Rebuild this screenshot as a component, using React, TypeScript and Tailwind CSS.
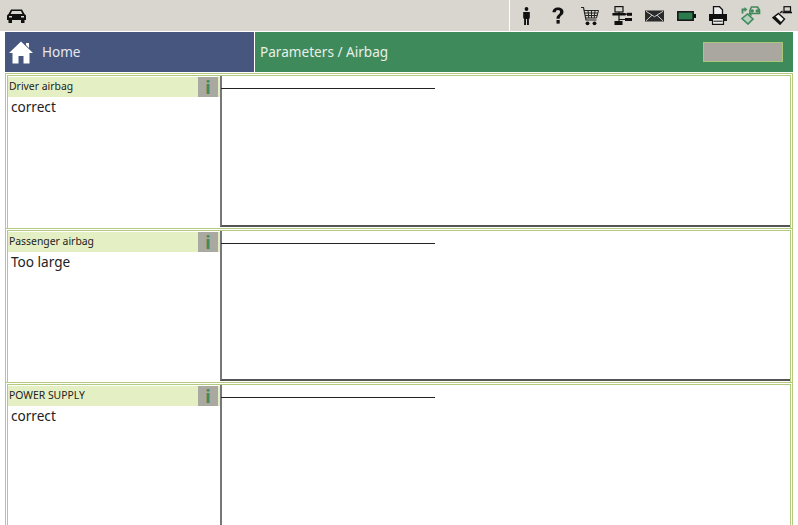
import React from 'react';

const PersonIcon = () => (
  <svg width="9" height="18" viewBox="0 0 9 18">
    <circle cx="4.5" cy="2" r="1.9" fill="#111" />
    <path d="M1.2 5h6.6v6.5H6.9V18H5v-6H4v6H2.1v-6.5h-.9z" fill="#111" />
  </svg>
);

const QuestionIcon = () => (
  <svg width="12" height="17" viewBox="0 0 12 17">
    <path d="M0.5 5.2C0.5 2 2.8 0.4 6 0.4s5.5 1.7 5.5 4.4c0 3.6-3.8 3.6-3.8 7H4.5c0-4.4 3.6-4.2 3.6-6.8 0-1.2-.8-1.9-2.1-1.9-1.4 0-2.2.8-2.2 2.1z" fill="#111" />
    <rect x="4.5" y="13" width="3.2" height="3.6" fill="#111" />
  </svg>
);

const CartIcon = () => (
  <svg width="18" height="20" viewBox="0 0 18 20" fill="none" stroke="#222" strokeWidth="1">
    <path d="M0 1.5h2.5l2.5 12.5h10.5" strokeWidth="1.2" />
    <path d="M3 4.5h14.5l-2 7.5H4.6M7 4.5l.8 7.5M10.5 4.5v7.5M14 4.5l-.8 7.5M3.6 7h13.2M4.2 9.5h12" />
    <circle cx="6.5" cy="17.3" r="1.9" fill="#111" stroke="none" />
    <circle cx="13.5" cy="17.3" r="1.9" fill="#111" stroke="none" />
  </svg>
);

const NetworkIcon = () => (
  <svg width="20" height="19" viewBox="0 0 20 19" fill="none" stroke="#111" strokeWidth="1.2">
    <rect x="3" y="0.6" width="8" height="5.4" />
    <path d="M1 7.5h12v1.5H1z" fill="#111" />
    <path d="M7 6v1.5M7 9v6M13 8.2h2M7 13.5h6" />
    <rect x="2.5" y="15" width="8" height="4" fill="#111" stroke="none" />
    <rect x="15" y="6.8" width="5" height="3" fill="#111" stroke="none" />
    <rect x="13" y="12" width="7" height="3" fill="#111" stroke="none" />
  </svg>
);

const MailIcon = () => (
  <svg width="19" height="12" viewBox="0 0 19 12">
    <rect x="0" y="0.5" width="19" height="11" fill="#2a2a2a" />
    <path d="M1 1.3l8.5 5.4L18 1.3M1 10.8l6-5.6M18 10.8l-6-5.6" fill="none" stroke="#ddd" strokeWidth="0.9" />
  </svg>
);

const BatteryIcon = () => (
  <svg width="19" height="10" viewBox="0 0 19 10">
    <rect x="0.8" y="0.8" width="15.4" height="8.4" fill="#2c7a4e" stroke="#111" strokeWidth="1.5" />
    <rect x="16.5" y="3" width="2.5" height="4" fill="#111" />
  </svg>
);

const PrinterIcon = () => (
  <svg width="20" height="19" viewBox="0 0 20 19">
    <path d="M5.5 0.7h6l3 3v5h-9z" fill="#eee" stroke="#111" strokeWidth="1.3" />
    <path d="M1 8h18v7h-3v-3H4v3H1z" fill="#111" />
    <path d="M4.5 12.5h11v5.8h-11z" fill="#eee" stroke="#111" strokeWidth="1.2" />
    <path d="M5.5 15.2h9" stroke="#111" strokeWidth="1" />
  </svg>
);

const DiagnosisIcon = () => (
  <svg width="21" height="19" viewBox="0 0 21 19" fill="none" stroke="#3f8a5a" strokeWidth="1.6">
    <path d="M2.5 7.5V3.5H5" strokeWidth="1.8" />
    <path d="M4.5 1l2.8 2.5L4.5 6z" fill="#3f8a5a" stroke="none" />
    <path d="M10 4l1.5-3h6L19.5 4v3.5H10z" />
    <circle cx="12.2" cy="5" r="1" fill="#3f8a5a" />
    <circle cx="17.3" cy="5" r="1" fill="#3f8a5a" />
    <path d="M7.5 8l5.5 5-5 5L2 12.5z" fill="#b4d2bd" />
    <path d="M9 7l2.5 2.5" />
  </svg>
);

const ConnectorIcon = () => (
  <svg width="20" height="19" viewBox="0 0 20 19" fill="none" stroke="#111" strokeWidth="1.2">
    <rect x="12" y="0.7" width="6.5" height="4.6" />
    <path d="M10.5 6.5H20" strokeWidth="1.6" />
    <path d="M6.5 7.5l6 5.5-4.5 5.2-7-6.5z" fill="#f4f4f0" strokeWidth="1.4" />
    <path d="M1 11.7l7 6.5 1.5-1.7-6-6z" fill="#111" stroke="none" />
    <path d="M8 7l2.5-2" strokeWidth="1.4" />
  </svg>
);

const CarIcon = () => (
  <svg width="19" height="14" viewBox="0 0 19 14">
    <path d="M4 0.5h11L17.5 5c1 .5 1.5 1.2 1.5 2.3V11H0V7.3C0 6.2.5 5.5 1.5 5z" fill="#111" />
    <path d="M5 2h9l1.4 3H3.6z" fill="#d9d5cf" />
    <rect x="1.5" y="10" width="3.5" height="4" fill="#111" />
    <rect x="14" y="10" width="3.5" height="4" fill="#111" />
    <rect x="2" y="7" width="3" height="1.5" fill="#d9d5cf" />
    <rect x="14" y="7" width="3" height="1.5" fill="#d9d5cf" />
  </svg>
);

const HomeIcon = () => (
  <svg width="24" height="23" viewBox="0 0 24 23">
    <path d="M12 0.5L24 12h-3.5v10.5H14.5V15h-5v7.5H3.5V12H0z M17 2h3v5l-3-3z" fill="#fff" />
  </svg>
);

const toolIcons = [
  <PersonIcon />,
  <QuestionIcon />,
  <CartIcon />,
  <NetworkIcon />,
  <MailIcon />,
  <BatteryIcon />,
  <PrinterIcon />,
  <DiagnosisIcon />,
  <ConnectorIcon />,
];

const ParameterRow = ({ label, value }: { label: string; value: string }) => (
  <div className="h-[154.5px] shrink-0 bg-white flex border-x-[3px] border-t-[3px] [border-style:double] border-[#b3cb7e]">
    <div className="w-[212px] shrink-0 bg-white flex flex-col">
      <div className="h-5 mt-px flex items-center justify-between bg-[#e4efc4]">
        <span className="pl-px text-[10.4px] text-[#222]">{label}</span>
        <span className="w-5 h-5 bg-[#a9a8a1] flex items-center justify-center text-[18px] leading-none font-bold text-[#3f8a5a] mr-[2px]">i</span>
      </div>
      <div className="pl-[3px] text-[13.6px] leading-5 text-[#222]">{value}</div>
    </div>
    <div className="flex-1 mb-px border-l-2 border-b-2 border-l-[#777] border-b-[#555] pt-3">
      <div className="w-[214px] -ml-px h-px bg-[#222]" />
    </div>
  </div>
);

export default function App() {
  return (
    <div className="w-[798px] h-[525px] overflow-hidden bg-white flex flex-col font-['Noto_Sans','Open_Sans',sans-serif]">
      <div className="h-[31px] shrink-0 flex items-center justify-between bg-[#d9d5cf] pl-[7px]">
        <CarIcon />
        <div className="h-full flex border-l border-white">
          {toolIcons.map((icon, i) => (
            <div key={i} className="w-8 flex items-center justify-center">
              {icon}
            </div>
          ))}
        </div>
      </div>

      <div className="h-10 shrink-0 mt-px mx-[5px] flex">
        <div className="w-[249px] bg-[#46567f] flex items-center gap-[9px] pl-1 text-[13.5px]">
          <HomeIcon />
          <span className="text-[#e8e8ee]">Home</span>
        </div>
        <div className="flex-1 ml-px bg-[#3f8a5a] flex items-center justify-between pl-[5px] pr-[10px] text-[13.6px] text-[#e8efe8]">
          <span>Parameters / Airbag</span>
          <div className="w-20 h-5 bg-[#aaa6a0] border border-[#a8c878]" />
        </div>
      </div>

      <div className="mt-px mx-[5px] flex flex-col">
        <ParameterRow label="Driver airbag" value="correct" />
        <ParameterRow label="Passenger airbag" value="Too large" />
        <ParameterRow label="POWER SUPPLY" value="correct" />
      </div>
    </div>
  );
}
